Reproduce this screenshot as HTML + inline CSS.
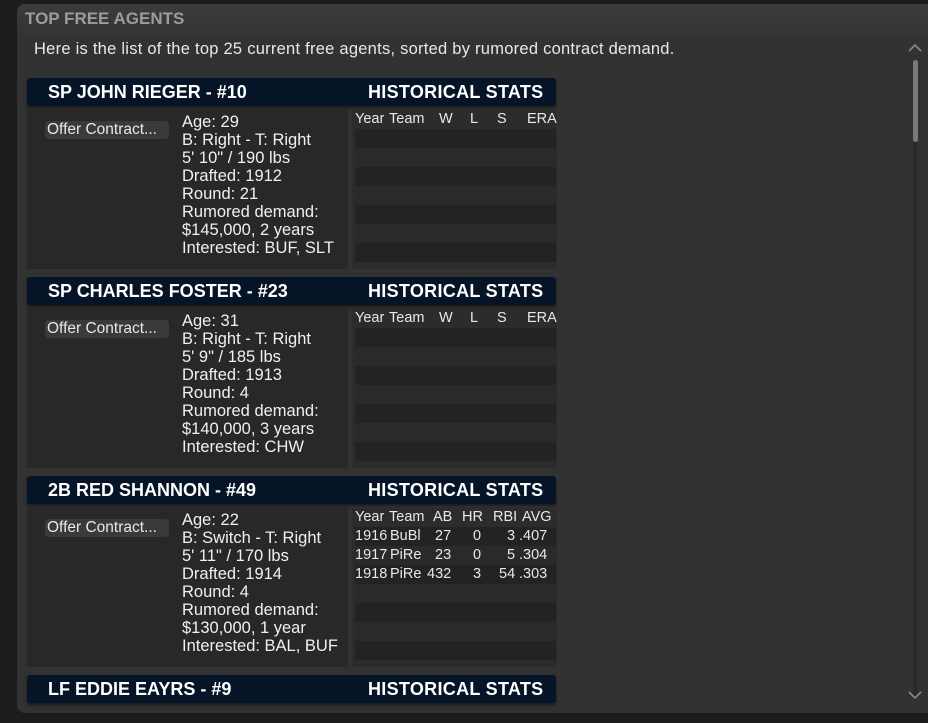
<!DOCTYPE html>
<html><head><style>
*{margin:0;padding:0;box-sizing:border-box}
body{width:928px;height:723px;background:#1c1c1c;font-family:"Liberation Sans",sans-serif;overflow:hidden;position:relative}
.panel{position:absolute;left:17px;top:4px;width:920px;height:709px;background:#323232;border-radius:8px;overflow:hidden}
.ttl{position:absolute;left:25px;top:9px;font-size:17px;font-weight:bold;color:#9c9c9c}
.top{position:absolute;left:17px;top:4px;width:920px;height:32px;background:linear-gradient(#3c3c3c,#333);border-radius:8px 8px 0 0}
.intro{position:absolute;left:34px;top:40px;font-size:16.5px;letter-spacing:0.25px;color:#e8e8e8;white-space:nowrap}
.card{position:absolute;left:27px;width:530px}
.hd{position:absolute;left:0;top:0;width:529px;height:28px;background:#051427;border-radius:3px;box-shadow:0 2px 3px rgba(0,0,0,.5);color:#fff;font-weight:bold;font-size:18px;white-space:nowrap}
.hd .n{position:absolute;left:21px;top:4px}
.hd .h{position:absolute;left:341px;top:4px;letter-spacing:0.3px}
.lb{position:absolute;left:0;top:30px;width:321px;height:161px;background:#282828}
.btn{position:absolute;left:18px;top:43px;width:124px;height:18px;background:#3a3a3a;border-radius:4px;color:#e8e8e8;font-size:15.5px;line-height:17px;padding-left:2px;white-space:nowrap;overflow:hidden}
.info{position:absolute;left:155px;top:35px;color:#f0f0f0;font-size:16.5px;line-height:18px;white-space:nowrap}
.sb{position:absolute;left:325px;top:30px;width:205px;height:161px;background:#2c2c2c}
.th,.tr{position:absolute;left:3px;width:201px;height:19px;font-size:14.5px;color:#e8e8e8}
.th{top:2px}
.tr.d{background:#232323}
.tr.l{background:#2a2a2a}
.c{position:absolute;top:1px;white-space:nowrap}
.sbar{position:absolute;left:913px;top:60px;width:4px;height:640px;background:#2a2a2a;border-radius:2px}
.thumb{position:absolute;left:913px;top:60px;width:5px;height:82px;background:#7a7a7a;border-radius:3px}
</style></head><body>
<div class="panel"></div>
<div class="top"></div>
<div class="ttl">TOP FREE AGENTS</div>
<div class="intro">Here is the list of the top 25 current free agents, sorted by rumored contract demand.</div>
<div style="position:absolute;left:0;top:0;width:928px;height:708px;overflow:hidden">

<div class="card" style="top:78px">
<div class="hd"><span class="n">SP JOHN RIEGER - #10</span><span class="h">HISTORICAL STATS</span></div>
<div class="lb"></div><div class="btn">Offer Contract...</div>
<div class="info">Age: 29<br>B: Right - T: Right<br>5' 10" / 190 lbs<br>Drafted: 1912<br>Round: 21<br>Rumored demand:<br>$145,000, 2 years<br>Interested: BUF, SLT</div>
<div class="sb">
<div class="th"><span class="c" style="left:0">Year</span><span class="c" style="left:34px">Team</span><span class="c" style="left:84px">W</span><span class="c" style="left:115px">L</span><span class="c" style="left:142px">S</span><span class="c" style="left:172px">ERA</span></div>
<div class="tr d" style="top:21px"></div><div class="tr l" style="top:40px"></div><div class="tr d" style="top:59px"></div><div class="tr l" style="top:78px"></div><div class="tr d" style="top:97px"></div><div class="tr l" style="top:116px"></div><div class="tr d" style="top:135px"></div>
</div></div>

<div class="card" style="top:277px">
<div class="hd"><span class="n">SP CHARLES FOSTER - #23</span><span class="h">HISTORICAL STATS</span></div>
<div class="lb"></div><div class="btn">Offer Contract...</div>
<div class="info">Age: 31<br>B: Right - T: Right<br>5' 9" / 185 lbs<br>Drafted: 1913<br>Round: 4<br>Rumored demand:<br>$140,000, 3 years<br>Interested: CHW</div>
<div class="sb">
<div class="th"><span class="c" style="left:0">Year</span><span class="c" style="left:34px">Team</span><span class="c" style="left:84px">W</span><span class="c" style="left:115px">L</span><span class="c" style="left:142px">S</span><span class="c" style="left:172px">ERA</span></div>
<div class="tr d" style="top:21px"></div><div class="tr l" style="top:40px"></div><div class="tr d" style="top:59px"></div><div class="tr l" style="top:78px"></div><div class="tr d" style="top:97px"></div><div class="tr l" style="top:116px"></div><div class="tr d" style="top:135px"></div>
</div></div>

<div class="card" style="top:476px">
<div class="hd"><span class="n">2B RED SHANNON - #49</span><span class="h">HISTORICAL STATS</span></div>
<div class="lb"></div><div class="btn">Offer Contract...</div>
<div class="info">Age: 22<br>B: Switch - T: Right<br>5' 11" / 170 lbs<br>Drafted: 1914<br>Round: 4<br>Rumored demand:<br>$130,000, 1 year<br>Interested: BAL, BUF</div>
<div class="sb">
<div class="th"><span class="c" style="left:0">Year</span><span class="c" style="left:34px">Team</span><span class="c" style="left:78px">AB</span><span class="c" style="left:107px">HR</span><span class="c" style="left:138px">RBI</span><span class="c" style="left:167px">AVG</span></div>
<div class="tr d" style="top:21px"><span class="c" style="left:0">1916</span><span class="c" style="left:35px">BuBl</span><span class="c" style="left:80px">27</span><span class="c" style="left:118px">0</span><span class="c" style="left:152px">3</span><span class="c" style="left:164px">.407</span></div>
<div class="tr l" style="top:40px"><span class="c" style="left:0">1917</span><span class="c" style="left:35px">PiRe</span><span class="c" style="left:80px">23</span><span class="c" style="left:118px">0</span><span class="c" style="left:152px">5</span><span class="c" style="left:164px">.304</span></div>
<div class="tr d" style="top:59px"><span class="c" style="left:0">1918</span><span class="c" style="left:35px">PiRe</span><span class="c" style="left:72px">432</span><span class="c" style="left:118px">3</span><span class="c" style="left:144px">54</span><span class="c" style="left:164px">.303</span></div>
<div class="tr l" style="top:78px"></div><div class="tr d" style="top:97px"></div><div class="tr l" style="top:116px"></div><div class="tr d" style="top:135px"></div>
</div></div>

<div class="card" style="top:675px">
<div class="hd"><span class="n">LF EDDIE EAYRS - #9</span><span class="h">HISTORICAL STATS</span></div>
</div>
</div>
<div class="sbar"></div><div class="thumb"></div>
<svg style="position:absolute;left:908px;top:43px" width="14" height="10"><path d="M1 8 L7 2 L13 8" stroke="#888" stroke-width="1.6" fill="none"/></svg>
<svg style="position:absolute;left:908px;top:690px" width="14" height="10"><path d="M1 2 L7 8 L13 2" stroke="#888" stroke-width="1.6" fill="none"/></svg>
</body></html>
